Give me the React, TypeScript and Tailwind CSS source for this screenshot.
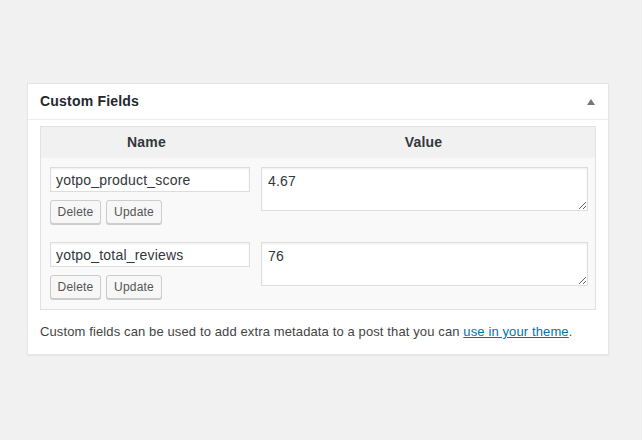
import React from 'react';

interface Field {
  key: string;
  value: string;
}

const fields: Field[] = [
  { key: 'yotpo_product_score', value: '4.67' },
  { key: 'yotpo_total_reviews', value: '76' },
];

function SmallButton({ label, width }: { label: string; width: string }) {
  return (
    <button
      type="button"
      className={`h-6 ${width} rounded-[3px] border border-[#ccc] bg-[#f7f7f7] text-[12px] tracking-[0.2px] text-[#555] shadow-[0_1px_0_#ccc]`}
    >
      {label}
    </button>
  );
}

export default function App(): React.ReactElement {
  return (
    <div
      className="min-h-screen bg-[#f1f1f1] pt-[83px] pl-[27px]"
      style={{ fontFamily: '"Liberation Sans", Arial, sans-serif' }}
    >
      {/* Meta box */}
      <div className="w-[582px] border border-[#e5e5e5] bg-white shadow-[0_1px_1px_rgba(0,0,0,0.04)]">
        <div className="flex h-[36px] items-center justify-between border-b border-[#eee] pl-3 pr-[13px]">
          <h2 className="text-[14px] font-bold tracking-[0.2px] text-[#23282d]">Custom Fields</h2>
          <svg width="8" height="6" viewBox="0 0 8 6" className="mt-px">
            <path d="M4 0 L8 6 L0 6 Z" fill="#72777c" />
          </svg>
        </div>

        <div className="px-3 pt-[6px] pb-3">
          {/* Fields table */}
          <div className="border border-[#e1e1e1] bg-[#f9f9f9]">
            <div className="flex h-[31px] items-center bg-[#f1f1f1] text-[14px] font-bold tracking-[0.2px] text-[#32373c]">
              <div className="w-[211px] text-center">Name</div>
              <div className="flex-1 text-center">Value</div>
            </div>

            {fields.map((f, i) => (
              <div key={f.key} className={`flex pt-[9px] ${i === fields.length - 1 ? 'pb-[10px]' : 'pb-[9px]'}`}>
                <div className="w-[211px] pl-[9px]">
                  <input
                    type="text"
                    defaultValue={f.key}
                    className="block h-[25px] w-[200px] border border-[#ddd] bg-white px-[5px] text-[14px] tracking-[0.2px] text-[#32373c] shadow-[inset_0_1px_2px_rgba(0,0,0,0.07)] outline-none"
                  />
                  <div className="mt-2 flex gap-[5px]">
                    <SmallButton label="Delete" width="w-[51px]" />
                    <SmallButton label="Update" width="w-[56px]" />
                  </div>
                </div>
                <div className="pl-[9px]">
                  <textarea
                    defaultValue={f.value}
                    className="block h-[44px] w-[327px] border border-[#ddd] bg-white px-[6px] pt-[3px] text-[14px] leading-5 tracking-[0.2px] text-[#32373c] shadow-[inset_0_1px_2px_rgba(0,0,0,0.07)] outline-none"
                  />
                </div>
              </div>
            ))}
          </div>

          <p className="mt-3 text-[13px] leading-5 tracking-[0.12px] text-[#444]">
            Custom fields can be used to add extra metadata to a post that you can{' '}
            <a href="#" className="text-[#0073aa] underline">
              use in your theme
            </a>
            .
          </p>
        </div>
      </div>
    </div>
  );
}
